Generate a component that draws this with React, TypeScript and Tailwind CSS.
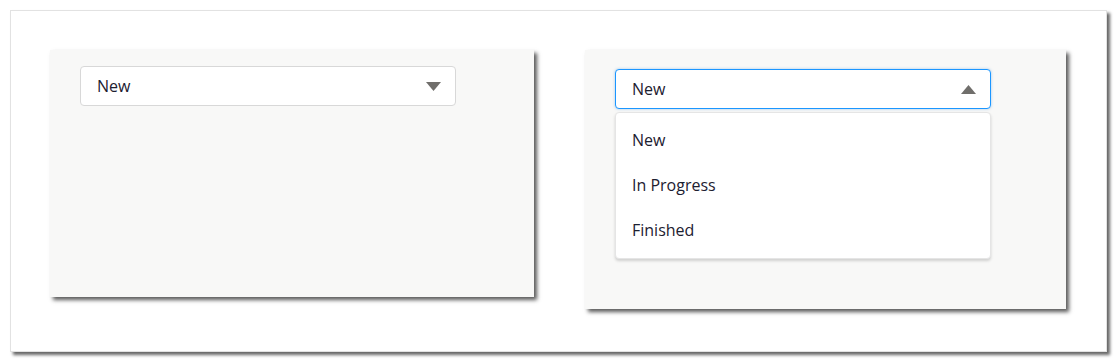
import React from 'react';

const options = ['New', 'In Progress', 'Finished'];

const Caret = ({ up }: { up?: boolean }) => (
  <svg width="15" height="9" viewBox="0 0 15 9" className="shrink-0">
    {up ? <path d="M7.5 0L15 9H0z" fill="#706e6b" /> : <path d="M0 0h15L7.5 9z" fill="#706e6b" />}
  </svg>
);

const SelectBox = ({ open }: { open?: boolean }) => (
  <div
    className={
      open
        ? 'flex h-[40px] w-[376px] items-center justify-between rounded-[4px] border border-[#1b96ff] bg-white pl-[16px] pr-[14px] shadow-[0_0_3px_rgba(1,118,211,0.35)]'
        : 'flex h-[40px] w-[376px] items-center justify-between rounded-[4px] border border-[#d8d8d8] bg-white pl-[16px] pr-[14px]'
    }
  >
    <span className="text-[16px] text-[#1c2030]">New</span>
    <Caret up={open} />
  </div>
);

const App = () => {
  return (
    <div className="h-[362px] w-[1118px] bg-white p-[10px] font-['Open_Sans',sans-serif]">
      <div className="flex h-[342px] w-[1097px] items-start gap-[51px] border border-[#e2e2e2] bg-white pl-[39px] pt-[39px] shadow-[3px_3px_3px_rgba(0,0,0,0.6)]">
        <div className="h-[247px] w-[484px] bg-[#f8f8f7] pl-[30px] pt-[16px] shadow-[3px_3px_4px_rgba(0,0,0,0.65)]">
          <SelectBox />
        </div>
        <div className="h-[259px] w-[481px] bg-[#f8f8f7] pl-[30px] pt-[19px] shadow-[3px_3px_4px_rgba(0,0,0,0.65)]">
          <SelectBox open />
          <div className="mt-[3px] w-[376px] rounded-[4px] border border-[#e5e5e5] bg-white pb-[6px] pt-[4px] shadow-[0_2px_3px_rgba(0,0,0,0.16)]">
            {options.map((o) => (
              <div key={o} className="flex h-[45px] items-center pl-[16px] text-[16px] text-[#1c2030]">
                {o}
              </div>
            ))}
          </div>
        </div>
      </div>
    </div>
  );
};

export default App;
